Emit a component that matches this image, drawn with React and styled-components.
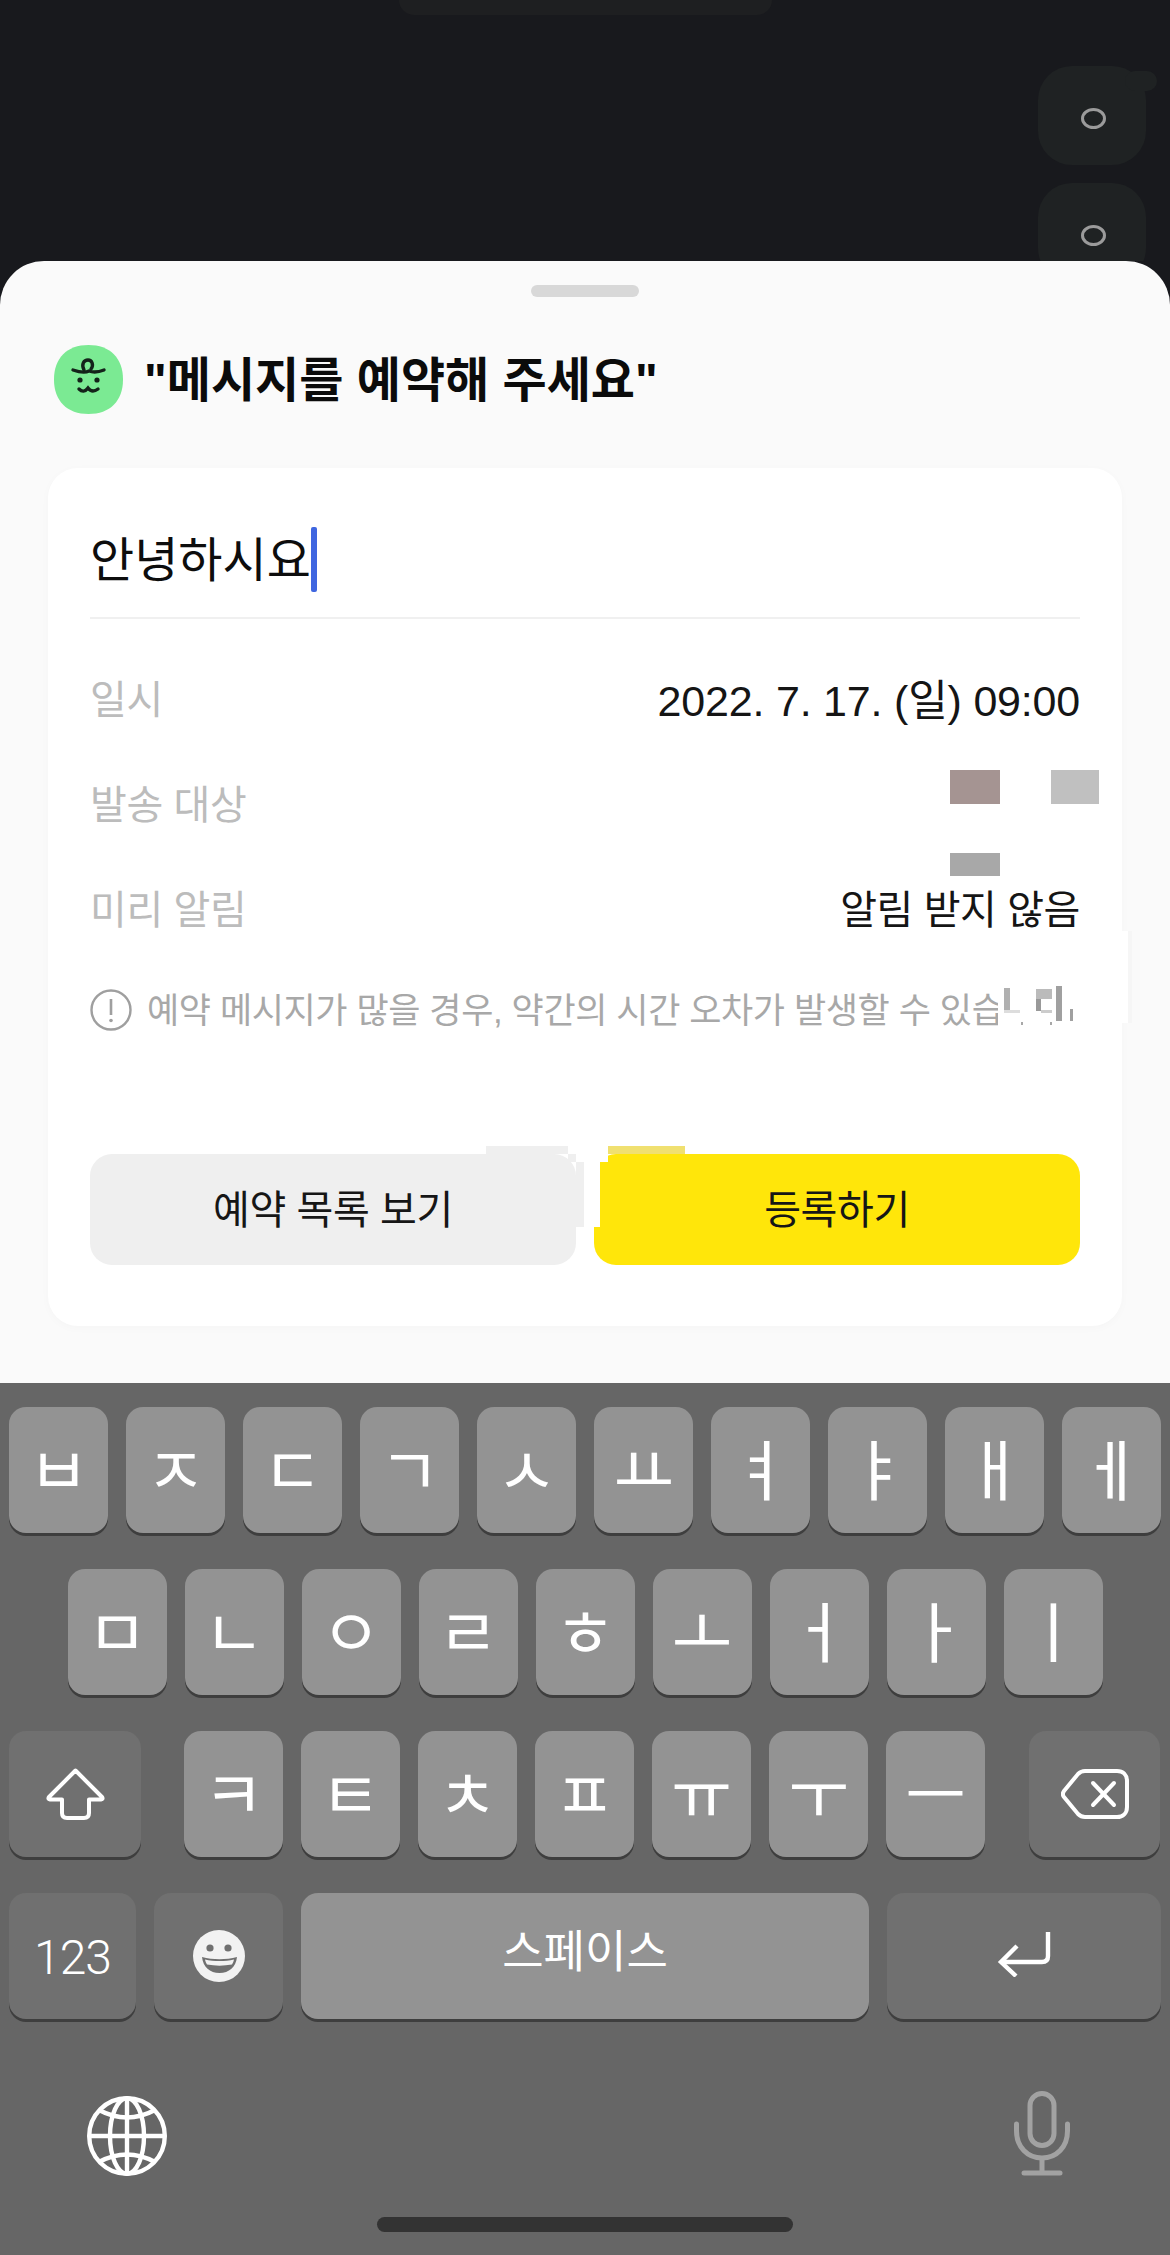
import React from "react";
import styled, { createGlobalStyle } from "styled-components";

const FONT = `"Liberation Sans", "Noto Sans CJK KR", sans-serif`;

const Global = createGlobalStyle`
  html, body { margin: 0; padding: 0; background: #18191d; }
  #root { width: 1170px; height: 2255px; overflow: hidden; }
  * { box-sizing: border-box; }
`;

const Page = styled.div`
  width: 1170px;
  height: 2255px;
  display: flex;
  flex-direction: column;
  font-family: ${FONT};
`;

/* Dimmed chat behind the sheet */
const Backdrop = styled.div`
  height: 261px;
  flex: none;
  background: #18191d;
  overflow: hidden;
  display: flex;
  flex-direction: column;
`;
const Notch = styled.div`
  width: 373px;
  height: 15px;
  flex: none;
  margin: 0 auto;
  background: #1e1f21;
  border-radius: 0 0 22px 22px;
`;
const BubbleColumn = styled.div`
  flex: none;
  margin: 51px 24px 0 0;
  display: flex;
  flex-direction: column;
  align-items: flex-end;
  gap: 18px;
`;
const Bubble = styled.div`
  position: relative;
  width: 108px;
  height: 99px;
  flex: none;
  border-radius: 34px;
  background: #1f2223;
  display: flex;
  align-items: center;
  justify-content: center;
  padding: 6px 0 0 3px;
  ${(p) => p.$tail && `
    &::after {
      content: "";
      position: absolute;
      top: 5px;
      right: -11px;
      width: 32px;
      height: 20px;
      border-radius: 10px;
      background: #1f2223;
    }
  `}
`;
const Ring = styled.span`
  width: 25px;
  height: 21px;
  border: 3px solid #9b9b9b;
  border-radius: 50%;
`;

/* Bottom sheet */
const Sheet = styled.section`
  height: 1122px;
  flex: none;
  background: #fafafa;
  border-radius: 44px 44px 0 0;
  padding: 24px 48px 0;
`;
const Handle = styled.div`
  width: 108px;
  height: 12px;
  margin: 0 auto;
  border-radius: 6px;
  background: #d8d8d8;
`;
const TitleRow = styled.header`
  display: flex;
  align-items: center;
  gap: 21px;
  margin: 48px 0 0 6px;
  height: 69px;
`;
const Title = styled.h1`
  margin: 2px 0 0;
  font-size: 48px;
  font-weight: 700;
  line-height: 69px;
  letter-spacing: 0;
  color: #0b0b0b;
`;
const Card = styled.div`
  position: relative;
  height: 858px;
  margin-top: 54px;
  padding: 59px 42px 0;
  background: #fff;
  border-radius: 30px;
  box-shadow: 0 2px 10px rgba(0, 0, 0, 0.025);
`;
const InputRow = styled.div`
  display: flex;
  align-items: center;
  height: 92px;
  padding-bottom: 25px;
  border-bottom: 2px solid #f0f0f0;
`;
const InputText = styled.span`
  font-size: 48px;
  line-height: 65px;
  margin-top: 2px;
  color: #0d0d0d;
`;
const Caret = styled.span`
  width: 6px;
  height: 65px;
  border-radius: 2px;
  background: #3f66e0;
`;
const Rows = styled.div`
  margin-top: 28px;
`;
const Row = styled.div`
  position: relative;
  height: 105px;
  padding-bottom: 5px;
  display: flex;
  align-items: center;
  justify-content: space-between;
  font-size: 40px;
`;
const Label = styled.span`
  color: #bcbcbc;
  letter-spacing: -0.4px;
`;
const Value = styled.span`
  color: #151515;
  font-size: ${(p) => (p.$num ? "43px" : "40px")};
  letter-spacing: ${(p) => (p.$num ? "-0.2px" : "-0.4px")};
`;
const Redaction = styled.i`
  position: absolute;
  left: ${(p) => p.$left}px;
  top: ${(p) => p.$top}px;
  width: ${(p) => p.$w}px;
  height: ${(p) => p.$h}px;
  background: ${(p) => p.$c};
`;
const Note = styled.div`
  position: relative;
  margin-top: 27px;
  height: 42px;
  display: flex;
  align-items: center;
  gap: 15px;
  color: #a8a8a8;
  font-size: 35px;
  letter-spacing: -0.4px;
  white-space: nowrap;
`;
const NoteText = styled.span`
  margin-bottom: 5px;
`;
const InfoIcon = styled.svg`
  width: 42px;
  height: 42px;
  flex: none;
`;
const Patch = styled.i`
  position: absolute;
  left: ${(p) => p.$left}px;
  top: ${(p) => p.$top}px;
  width: ${(p) => p.$w}px;
  height: ${(p) => p.$h}px;
  background: ${(p) => p.$c || "#fff"};
`;
const ButtonRow = styled.div`
  position: relative;
  display: flex;
  gap: 18px;
  margin-top: 123px;
`;
const ActionButton = styled.button`
  flex: 1;
  height: 111px;
  border: 0;
  padding: 0 0 6px;
  border-radius: 22px;
  font-family: inherit;
  font-size: 40px;
  letter-spacing: -0.4px;
  color: #161616;
  background: ${(p) => (p.$primary ? "#ffe60a" : "#efefef")};
`;

/* Keyboard */
const Keyboard = styled.section`
  flex: 1;
  position: relative;
  background: #666;
  padding: 24px 9px 0;
  display: flex;
  flex-direction: column;
  gap: 36px;
`;
const KeyRow = styled.div`
  display: flex;
  gap: 18px;
  justify-content: ${(p) => p.$justify || "center"};
`;
const Key = styled.div`
  width: ${(p) => p.$w || 99}px;
  height: 126px;
  flex: none;
  border-radius: 17px;
  background: ${(p) => (p.$fn ? "#707070" : "#939393")};
  box-shadow: 0 3px 0 #3e3e3e;
  color: #fff;
  display: flex;
  align-items: center;
  justify-content: center;
  font-weight: 400;
  font-family: "Noto Sans CJK KR", sans-serif;
  font-size: ${(p) => p.$size || 66}px;
  line-height: 1;
  padding-bottom: ${(p) => p.$lift ?? 8}px;
`;
const Spacer = styled.div`
  flex: none;
  width: ${(p) => p.$w}px;
`;
const NumKey = styled(Key)`
  font-family: Roboto, sans-serif;
  font-weight: 300;
  font-size: 48px;
  letter-spacing: -1px;
  padding-bottom: 0;
  padding-top: 4px;
`;
const BottomBar = styled.div`
  position: relative;
  display: flex;
  align-items: flex-start;
  justify-content: space-between;
  padding: 41px 91px 0 78px;
`;
const MicSlot = styled.div`
  margin-top: -5px;
  line-height: 0;
`;
const HomeBar = styled.div`
  position: absolute;
  left: 377px;
  bottom: 23px;
  width: 416px;
  height: 15px;
  border-radius: 8px;
  background: #333;
`;

const Mascot = () => (
  <svg width="69" height="69" viewBox="0 0 69 69">
    <path d="M34.5 0C56 0 69 13 69 34.5S56 69 34.5 69 0 56 0 34.5 13 0 34.5 0Z" fill="#7bea93" />
    <g fill="none" stroke="#14231a" strokeWidth="3.4" strokeLinecap="round">
      <path d="M19 25c6 2 12 3 16 1 5 2 10 1 15-1" />
      <path d="M30 25c-3-6 0-10 4-10s6 5 3 9" />
      <path d="M25 44c3 3 6 3 9-1 3 4 6 4 10 1" />
    </g>
    <circle cx="26" cy="35" r="2.6" fill="#14231a" />
    <circle cx="43" cy="35" r="2.6" fill="#14231a" />
  </svg>
);

const ShiftIcon = () => (
  <svg width="59" height="52" viewBox="0 0 59 52" fill="none" stroke="#fff" strokeWidth="4" strokeLinejoin="round">
    <path d="M29.5 2.5 56 29q1.5 2.2-1 2.5H43V45q0 5-5 5H21q-5 0-5-5V31.5H4q-2.5-.3-1-2.5Z" />
  </svg>
);
const DeleteIcon = () => (
  <svg width="68" height="50" viewBox="0 0 68 50" fill="none" stroke="#fff" strokeWidth="4" strokeLinecap="round">
    <path d="M24 2H56c6 0 10 4 10 10V38c0 6-4 10-10 10H24c-3 0-5-1-7-3L3 28c-1.5-2-1.5-4 0-6L17 5c2-2 4-3 7-3Z" />
    <path d="M32 14 53 36M53 14 32 36" />
  </svg>
);
const ReturnIcon = () => (
  <svg width="54" height="45" viewBox="0 0 54 45" fill="none" stroke="#fff" strokeWidth="4.4">
    <path d="M51 0V24c0 4-2 6-6 6H4" />
    <path d="M20 14 4 30 19 44" />
  </svg>
);
const EmojiIcon = () => (
  <svg width="52" height="52" viewBox="0 0 52 52">
    <circle cx="26" cy="26" r="26" fill="#f2f2f2" />
    <circle cx="17" cy="18" r="3.6" fill="#707070" />
    <circle cx="35" cy="18" r="3.6" fill="#707070" />
    <path d="M9 27c11 3 24 3 35 0-1 10-8 16-17.500 16S10 37 9 27Z" fill="#707070" />
    <path d="M12 29.500c9 2 20 2 29 0-.5 2-1 3.500-2 5-8 1.500-17 1.500-25 0-1-1.500-1.500-3-2-5Z" fill="#f2f2f2" />
  </svg>
);
const GlobeIcon = () => (
  <svg width="80" height="80" viewBox="0 0 80 80" fill="none" stroke="#fff" strokeWidth="4.4">
    <circle cx="40" cy="40" r="37.800" />
    <ellipse cx="40" cy="40" rx="17" ry="37.800" />
    <path d="M40 2V78M2 40H78" />
    <path d="M12 14Q40 29 68 14M12 66Q40 51 68 66" />
  </svg>
);
const MicIcon = () => (
  <svg width="56" height="85" viewBox="0 0 56 85" fill="none" stroke="#a2a2a2" strokeWidth="5" strokeLinecap="round">
    <rect x="16" y="2.500" width="24" height="52" rx="12" />
    <path d="M2.500 33V40c0 16 11 27 25.500 27s25.500-11 25.500-27V33" />
    <path d="M28 67V81" strokeLinecap="butt" />
    <path d="M10 82H46" />
  </svg>
);

const ROW1 = ["ㅂ", "ㅈ", "ㄷ", "ㄱ", "ㅅ", "ㅛ", "ㅕ", "ㅑ", "ㅐ", "ㅔ"];
const ROW2 = ["ㅁ", "ㄴ", "ㅇ", "ㄹ", "ㅎ", "ㅗ", "ㅓ", "ㅏ", "ㅣ"];
const ROW3 = ["ㅋ", "ㅌ", "ㅊ", "ㅍ", "ㅠ", "ㅜ", "ㅡ"];

/* Scrambled pixels left at the end of the notice line */
const NOTE_SCRAPS = [
  { l: 914, t: -1, w: 6, h: 22, c: "#b0b0b0" },
  { l: 914, t: 21, w: 16, h: 3, c: "#dddddd" },
  { l: 946, t: 0, w: 16, h: 10, c: "#bbbbbb" },
  { l: 946, t: 10, w: 5, h: 12, c: "#999999" },
  { l: 951, t: 21, w: 11, h: 3, c: "#cccccc" },
  { l: 966, t: -3, w: 6, h: 35, c: "#a0a0a0" },
  { l: 980, t: 20, w: 3, h: 12, c: "#a0a0a0" },
  { l: 931, t: 33, w: 2, h: 3, c: "#a8a8a8" },
  { l: 960, t: 33, w: 2, h: 3, c: "#a8a8a8" },
];

export default function App() {
  return (
    <Page>
      <Global />
      <Backdrop>
        <Notch />
        <BubbleColumn>
          <Bubble $tail><Ring /></Bubble>
          <Bubble><Ring /></Bubble>
        </BubbleColumn>
      </Backdrop>

      <Sheet>
        <Handle />
        <TitleRow>
          <Mascot />
          <Title>"메시지를 예약해 주세요"</Title>
        </TitleRow>
        <Card>
          <InputRow>
            <InputText>안녕하시요</InputText>
            <Caret />
          </InputRow>
          <Rows>
            <Row>
              <Label>일시</Label>
              <Value $num>2022. 7. 17. (일) 09:00</Value>
            </Row>
            <Row>
              <Label>발송 대상</Label>
              <Redaction $left={860} $top={18} $w={50} $h={34} $c="#a59492" />
              <Redaction $left={961} $top={18} $w={48} $h={34} $c="#c0c0c0" />
              <Redaction $left={860} $top={101} $w={50} $h={23} $c="#a8a8a8" />
            </Row>
            <Row>
              <Label>미리 알림</Label>
              <Value>알림 받지 않음</Value>
            </Row>
          </Rows>
          <Note>
            <InfoIcon viewBox="0 0 42 42" fill="none">
              <circle cx="21" cy="21" r="19.5" stroke="#9f9f9f" strokeWidth="2.4" />
              <path d="M21 10V26" stroke="#9f9f9f" strokeWidth="2.6" />
              <circle cx="21" cy="31.5" r="1.8" fill="#9f9f9f" />
            </InfoIcon>
            <NoteText>예약 메시지가 많을 경우, 약간의 시간 오차가 발생할 수 있습니다.</NoteText>
            <Patch $left={908} $top={-6} $w={84} $h={46} />
            {NOTE_SCRAPS.map((s) => (
              <Patch key={`${s.l}-${s.t}`} $left={s.l} $top={s.t} $w={s.w} $h={s.h} $c={s.c} />
            ))}
          </Note>
          <ButtonRow>
            <ActionButton>예약 목록 보기</ActionButton>
            <ActionButton $primary>등록하기</ActionButton>
            <Patch $left={396} $top={-8} $w={82} $h={8} $c="#efefef" />
            <Patch $left={478} $top={0} $w={8} $h={8} $c="#efefef" />
            <Patch $left={486} $top={8} $w={8} $h={65} $c="#efefef" />
            <Patch $left={504} $top={0} $w={14} $h={8} />
            <Patch $left={504} $top={8} $w={6} $h={65} />
            <Patch $left={518} $top={-8} $w={77} $h={8} $c="#f0e070" />
          </ButtonRow>
          <Patch $left={1074} $top={463} $w={6} $h={92} />
          <Patch $left={1080} $top={463} $w={4} $h={92} $c="#f6f6f6" />
        </Card>
      </Sheet>

      <Keyboard>
        <KeyRow>{ROW1.map((k) => <Key key={k}>{k}</Key>)}</KeyRow>
        <KeyRow>{ROW2.map((k) => <Key key={k}>{k}</Key>)}</KeyRow>
        <KeyRow $justify="flex-start">
          <Key $fn $w={132} $lift={0}><ShiftIcon /></Key>
          <Spacer $w={7} />
          {ROW3.map((k) => <Key key={k}>{k}</Key>)}
          <Spacer $w={8} />
          <Key $fn $w={131} $lift={0}><DeleteIcon /></Key>
        </KeyRow>
        <KeyRow $justify="flex-start">
          <NumKey $fn $w={127}>123</NumKey>
          <Key $fn $w={129} $lift={0}><EmojiIcon /></Key>
          <Key $w={568} $size={45} $lift={16}>스페이스</Key>
          <Key $fn $w={274} $lift={3}><ReturnIcon /></Key>
        </KeyRow>
        <BottomBar>
          <GlobeIcon />
          <MicSlot><MicIcon /></MicSlot>
        </BottomBar>
        <HomeBar />
      </Keyboard>
    </Page>
  );
}
